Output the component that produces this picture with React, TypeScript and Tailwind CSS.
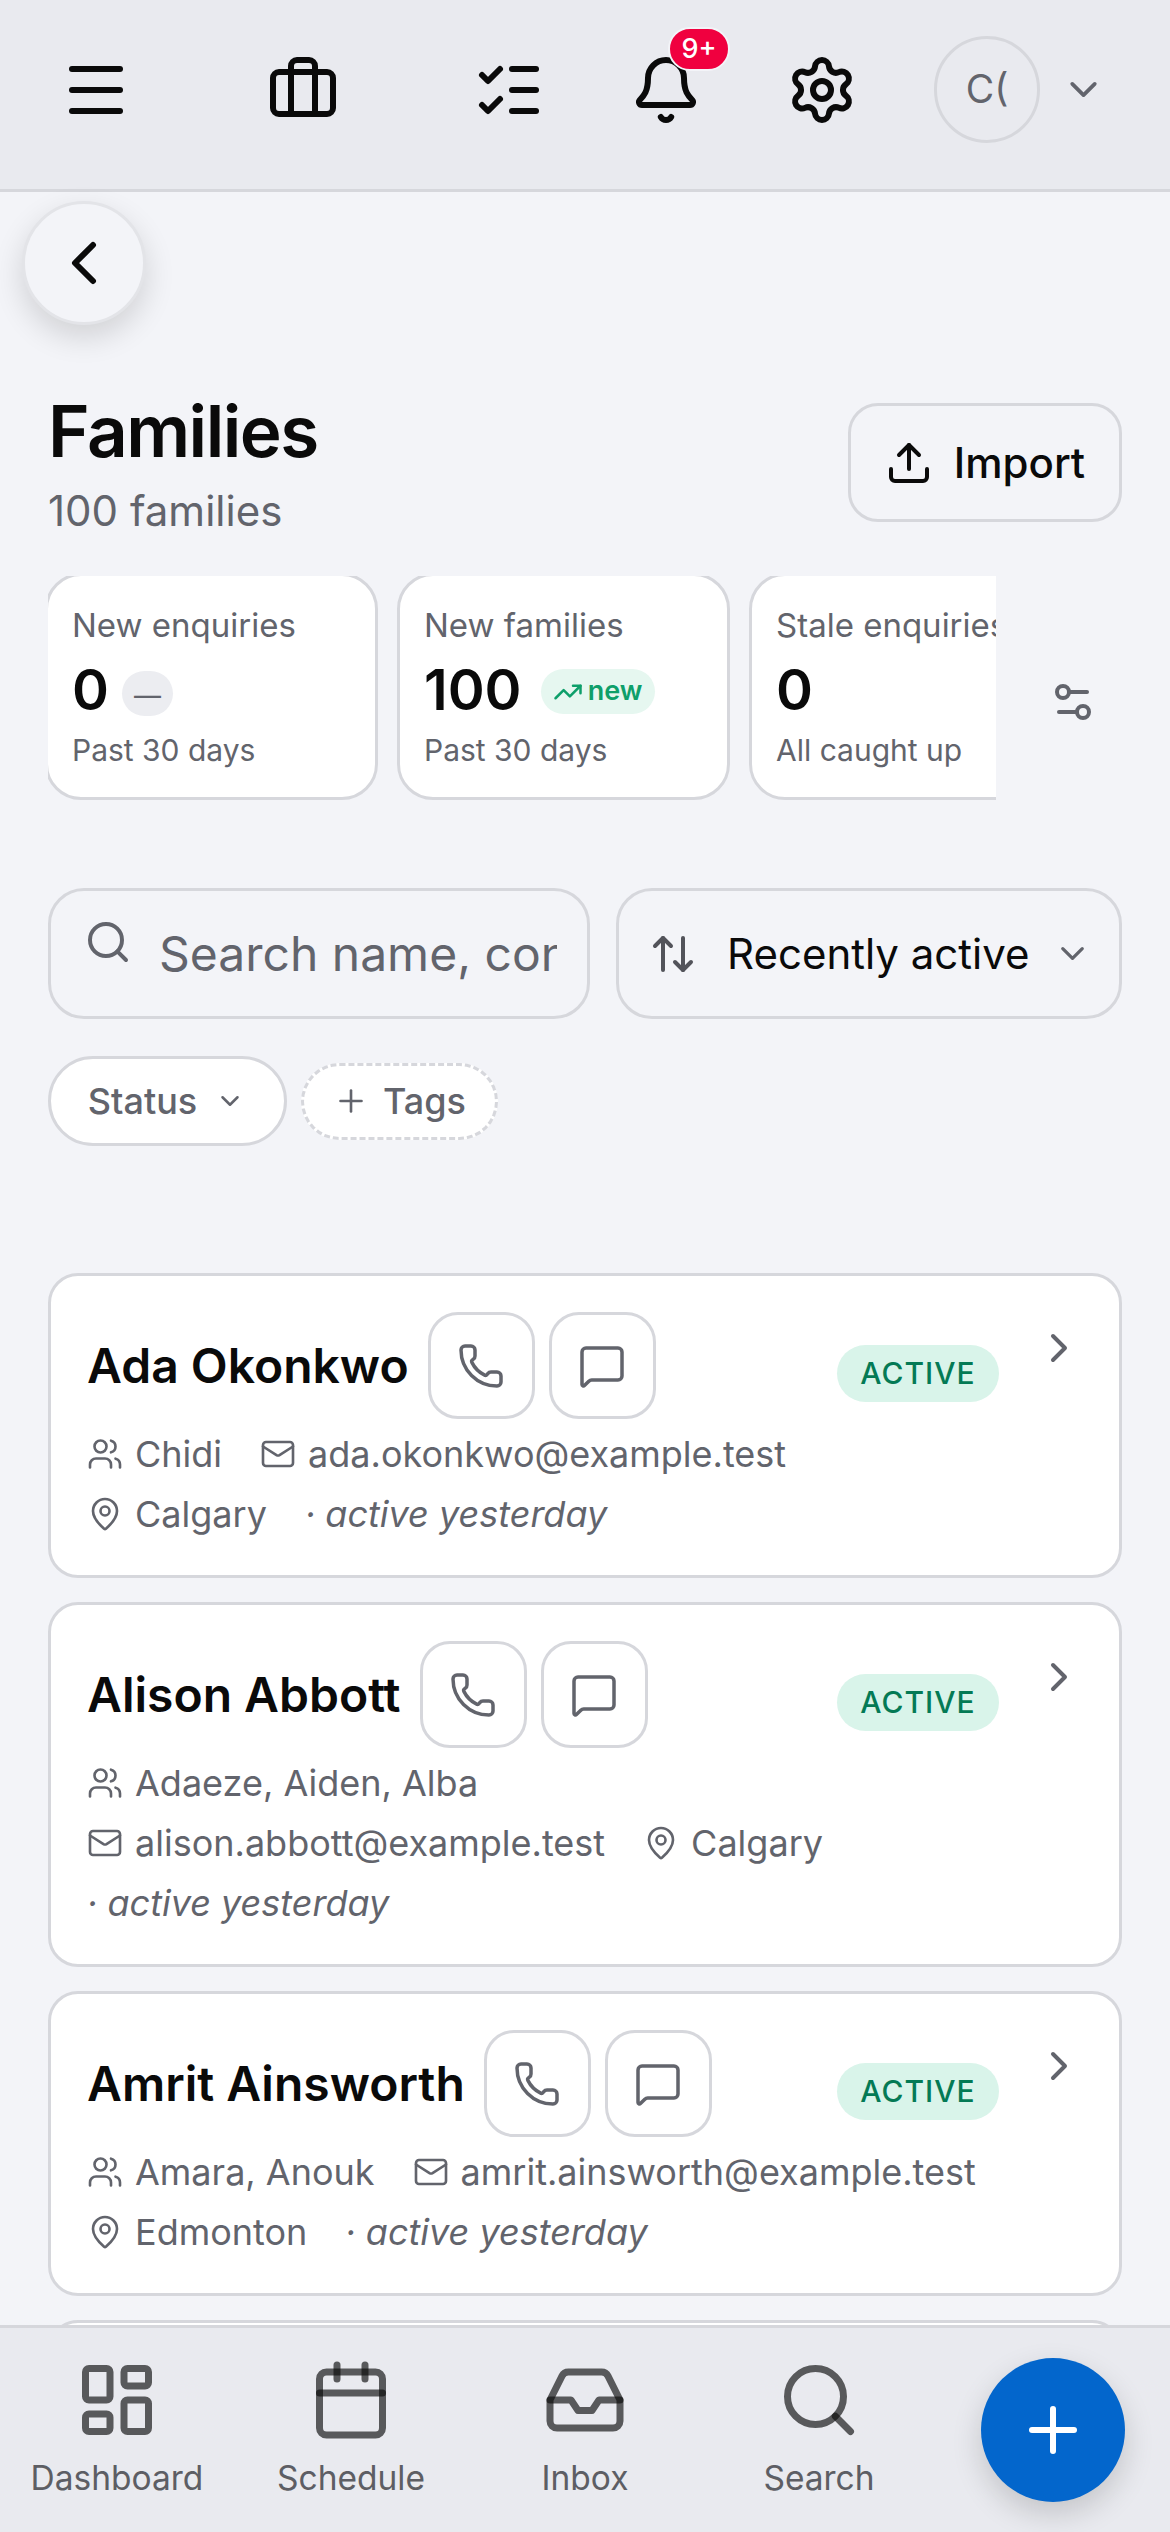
import { ArrowUpDown, Bell, Briefcase, Calendar, ChevronDown, ChevronLeft, ChevronRight, Inbox, LayoutDashboard, ListChecks, Mail, MapPin, Menu, MessageSquare, Phone, Plus, Search, Settings, Settings2, TrendingUp, Upload, Users } from 'lucide-react'

const families = [
  { name: 'Ada Okonkwo', kids: 'Chidi', email: 'ada.okonkwo@example.test', city: 'Calgary' },
  { name: 'Alison Abbott', kids: 'Adaeze, Aiden, Alba', email: 'alison.abbott@example.test', city: 'Calgary' },
  { name: 'Amrit Ainsworth', kids: 'Amara, Anouk', email: 'amrit.ainsworth@example.test', city: 'Edmonton' },
]

const navItems = [
  { label: 'Dashboard', icon: LayoutDashboard },
  { label: 'Schedule', icon: Calendar },
  { label: 'Inbox', icon: Inbox },
  { label: 'Search', icon: Search },
]

function StatCard({ title, value, note, badge }: { title: string; value: string; note: string; badge: React.ReactNode }) {
  return (
    <div className="w-[333px] h-[227px] shrink-0 bg-white border-[3px] border-[#d6d7dc] rounded-[36px] pl-[24px] pt-[25px]">
      <div className="text-[33px] leading-[48px] text-[#62646c] whitespace-nowrap">{title}</div>
      <div className="flex items-center gap-[13px] h-[66px] mt-[8px]">
        <span className="text-[56px] font-semibold text-[#0a0a0a] leading-none">{value}</span>
        {badge}
      </div>
      <div className="text-[30px] leading-[42px] text-[#62646c] mt-[6px]">{note}</div>
    </div>
  )
}

function FamilyCard({ name, kids, email, city }: { name: string; kids: string; email: string; city: string }) {
  return (
    <div className="flex gap-[36px] bg-white border-[3px] border-[#d6d7dc] rounded-[30px] pl-[36px] pr-[36px] pt-[36px] pb-[37px]">
      <div className="flex-1 min-w-0">
        <div className="flex items-center justify-between">
          <div className="flex items-center gap-[14px]">
            <span className="text-[48px] font-semibold text-[#0a0a0a] mr-[5px] whitespace-nowrap">{name}</span>
            <button className="w-[107px] h-[107px] flex items-center justify-center border-[3px] border-[#d6d7dc] rounded-[30px]">
              <Phone size={48} strokeWidth={1.75} color="#62646c" />
            </button>
            <button className="w-[107px] h-[107px] flex items-center justify-center border-[3px] border-[#d6d7dc] rounded-[30px]">
              <MessageSquare size={48} strokeWidth={1.75} color="#62646c" />
            </button>
          </div>
          <span className="h-[57px] w-[162px] mt-[15px] flex items-center justify-center rounded-full bg-[#d9f4ea] text-[#047a55] text-[30px] font-medium tracking-[1px]">ACTIVE</span>
        </div>
        <div className="flex flex-wrap gap-x-[38px] gap-y-[12px] mt-[11px] text-[36px] leading-[48px] text-[#62646c]">
          <span className="flex items-center gap-[12px]"><Users size={36} strokeWidth={1.75} />{kids}</span>
          <span className="flex items-center gap-[12px]"><Mail size={36} strokeWidth={1.75} />{email}</span>
          <span className="flex items-center gap-[12px]"><MapPin size={36} strokeWidth={1.75} />{city}</span>
          <span className="italic">· active yesterday</span>
        </div>
      </div>
      <ChevronRight size={48} strokeWidth={2} color="#62646c" className="shrink-0 mt-[12px]" />
    </div>
  )
}

export default function App() {
  return (
    <div className="relative w-[1170px] h-[2532px] overflow-hidden flex flex-col bg-[#f3f4f8] font-['Inter',sans-serif]">
      {/* top bar */}
      <div className="h-[192px] shrink-0 flex items-start pt-[36px] bg-[#e9eaef] border-b-[3px] border-[#d6d7dc]">
        <div className="w-[192px] h-[107px] flex items-center justify-center"><Menu size={72} strokeWidth={2} color="#0a0a0a" /></div>
        <div className="w-[222px] h-[107px] flex items-center justify-center"><Briefcase size={72} strokeWidth={2} color="#0a0a0a" /></div>
        <div className="w-[190px] h-[107px] flex items-center justify-center"><ListChecks size={72} strokeWidth={2} color="#0a0a0a" /></div>
        <div className="relative w-[124px] h-[107px] flex items-center justify-center">
          <Bell size={72} strokeWidth={2} color="#0a0a0a" />
          <span className="absolute left-[64px] -top-[9px] w-[62px] h-[44px] flex items-center justify-center rounded-full bg-[#f0003f] border-[2px] border-[#f3f4f8] text-white text-[27px] font-medium">9+</span>
        </div>
        <div className="w-[188px] h-[107px] flex items-center justify-center"><Settings size={72} strokeWidth={2} color="#0a0a0a" /></div>
        <div className="w-[106px] h-[107px] flex items-center justify-center rounded-full border-[3px] border-[#d6d7dc] text-[39px] text-[#62646c] ml-[18px] overflow-hidden">C(</div>
        <div className="h-[107px] flex items-center ml-[21px]"><ChevronDown size={45} strokeWidth={2} color="#62646c" /></div>
      </div>

      {/* back button */}
      <button className="absolute left-[22px] top-[201px] w-[124px] h-[124px] flex items-center justify-center rounded-full bg-[#f3f4f8] border-[3px] border-[#e3e4e8] shadow-[0_12px_30px_rgba(0,0,0,0.14)]">
        <ChevronLeft size={72} strokeWidth={2} color="#0a0a0a" />
      </button>

      {/* page content */}
      <div className="flex-1 min-h-0 overflow-hidden px-[48px] pt-[200px]">
        <div className="flex items-start justify-between">
          <div>
            <h1 className="text-[71px] leading-[78px] font-semibold tracking-[-1.5px] text-[#0a0a0a]">Families</h1>
            <p className="text-[42px] leading-[54px] text-[#62646c] mt-[14px]">100 families</p>
          </div>
          <button className="w-[274px] h-[119px] mt-[11px] flex items-center justify-center gap-[21px] border-[3px] border-[#d6d7dc] rounded-[30px] text-[42px] font-medium text-[#0a0a0a]">
            <Upload size={48} strokeWidth={2} />
            Import
          </button>
        </div>

        <div className="flex items-center mt-[38px]">
          <div className="w-[948px] h-[224px] overflow-hidden">
            <div className="flex gap-[19px] -mt-[3px] -ml-[3px]">
              <StatCard title="New enquiries" value="0" note="Past 30 days" badge={<span className="w-[51px] h-[45px] mt-[6px] flex items-center justify-center rounded-full bg-[#ecedf1] text-[#62646c] text-[27px] pt-[6px]">—</span>} />
              <StatCard title="New families" value="100" note="Past 30 days" badge={<span className="w-[114px] h-[45px] ml-[6px] mt-[3px] flex items-center justify-center gap-[5px] rounded-full bg-[#e6f7f0] text-[#0e9f6a] text-[27px] font-semibold"><TrendingUp size={30} strokeWidth={2} />new</span>} />
              <StatCard title="Stale enquiries" value="0" note="All caught up" badge={null} />
            </div>
          </div>
          <Settings2 size={48} strokeWidth={2} color="#62646c" className="ml-[53px] mt-[28px]" />
        </div>

        <div className="flex gap-[26px] mt-[88px]">
          <div className="w-[542px] h-[131px] flex items-center gap-[27px] pl-[33px] pr-[30px] border-[3px] border-[#d6d7dc] rounded-[36px] overflow-hidden">
            <Search size={48} strokeWidth={2} color="#62646c" className="shrink-0 -mt-[24px]" />
            <span className="text-[48px] text-[#62646c] whitespace-nowrap overflow-hidden">Search name, contact</span>
          </div>
          <div className="flex-1 h-[131px] flex items-center pl-[30px] pr-[27px] border-[3px] border-[#d6d7dc] rounded-[36px]">
            <ArrowUpDown size={48} strokeWidth={2} color="#52535a" className="shrink-0" />
            <span className="text-[42px] text-[#0a0a0a] ml-[30px] flex-1 whitespace-nowrap">Recently active</span>
            <ChevronDown size={39} strokeWidth={2} color="#62646c" />
          </div>
        </div>

        <div className="flex items-center gap-[14px] mt-[37px]">
          <div className="w-[239px] h-[90px] flex items-center justify-center gap-[18px] bg-white border-[3px] border-[#d6d7dc] rounded-full text-[36px] font-medium text-[#62646c] pr-[2px]">
            Status <ChevronDown size={30} strokeWidth={2} />
          </div>
          <div className="w-[197px] h-[77px] flex items-center justify-center gap-[14px] bg-white border-[3px] border-dashed border-[#d6d7dc] rounded-full text-[36px] font-medium text-[#62646c]">
            <Plus size={36} strokeWidth={1.75} /> Tags
          </div>
        </div>

        <div className="flex flex-col gap-[24px] mt-[127px]">
          {families.map(f => <FamilyCard key={f.name} {...f} />)}
          <div className="h-[120px] bg-white border-[3px] border-[#d6d7dc] rounded-[30px]" />
        </div>
      </div>

      {/* bottom nav */}
      <div className="relative z-10 h-[207px] shrink-0 grid grid-cols-5 bg-[#e9eaef] border-t-[3px] border-[#d6d7dc] pt-[30px]">
        {navItems.map(item => (
          <div key={item.label} className="flex flex-col items-center">
            <item.icon size={84} strokeWidth={2} color="#0a0a0a" strokeOpacity={0.65} />
            <span className="text-[33.5px] leading-[44px] text-[#5d5e64] mt-[14px]">{item.label}</span>
          </div>
        ))}
        <div className="flex justify-center">
          <button className="w-[144px] h-[144px] flex items-center justify-center rounded-full bg-[#0366cc] shadow-[0_12px_30px_rgba(0,0,0,0.16)]">
            <Plus size={72} strokeWidth={2} color="#ffffff" />
          </button>
        </div>
      </div>
    </div>
  )
}
